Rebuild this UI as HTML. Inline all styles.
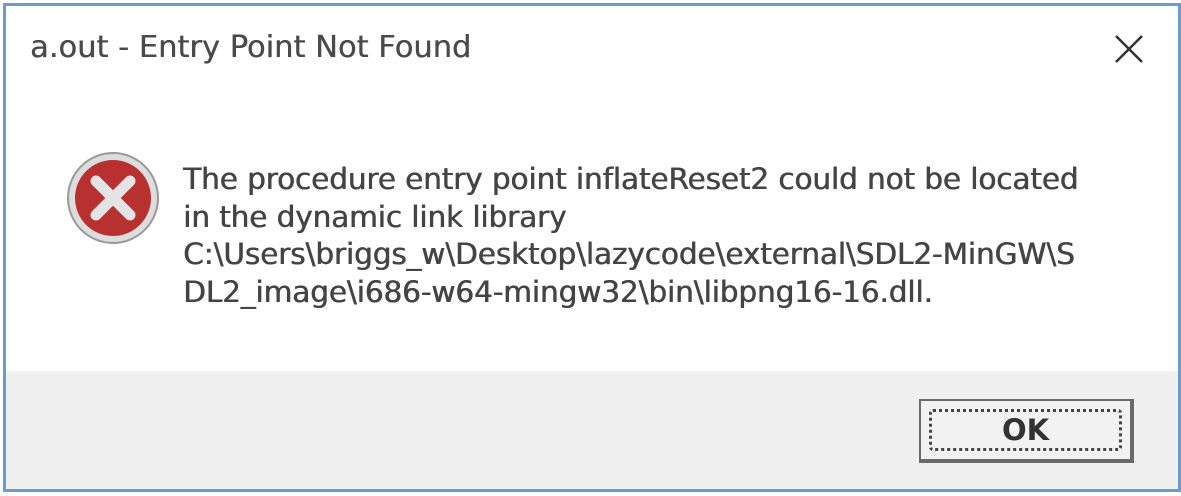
<!DOCTYPE html>
<html><head><style>
body{margin:0;width:1181px;height:496px;background:#fff;overflow:hidden;font-family:"DejaVu Sans","Liberation Sans",sans-serif;color:#3c3c3c}
.win{position:absolute;left:3px;top:3px;width:1172px;height:483px;border:3px solid #6d9ccc;background:#fff}
.title{position:absolute;left:24px;top:24px;font-size:30.5px;color:#4a4a4a;text-shadow:0.4px 0 0 #4a4a4a}
.x{position:absolute;left:1108px;top:28px}
.msg{position:absolute;left:177px;top:155px;font-size:29.5px;line-height:37.5px;color:#444;white-space:pre;letter-spacing:-0.1px;text-shadow:0.6px 0 0 #444}
.foot{position:absolute;left:0;top:365px;width:1172px;height:118px;background:#f0f0f0}
.btn{position:absolute;left:913px;top:28px;width:209px;height:58px;border:2px solid #6a6a6a;border-right-width:4px;border-bottom-width:4px;background:#f2f2f2}
.focus{position:absolute;left:8px;top:8px;right:8px;bottom:8px;border:3px dotted #444;border-radius:4px;text-align:center;font-size:29px;line-height:36px;color:#333;font-weight:bold}
</style></head><body>
<div class="win">
<div class="title">a.out - Entry Point Not Found</div>
<svg class="x" width="30" height="30"><path d="M2 2L28 28M28 2L2 28" stroke="#333" stroke-width="2.5"/></svg>
<svg style="position:absolute;left:60px;top:145px" width="94" height="94"><circle cx="47" cy="47" r="45" fill="#ddd" stroke="#999" stroke-width="2"/><circle cx="47" cy="47" r="38" fill="#b8302f"/><path d="M30 30L64 64M64 30L30 64" stroke="#e4e4e4" stroke-width="11" stroke-linecap="round"/></svg>
<div class="msg">The procedure entry point inflateReset2 could not be located
in the dynamic link library
C:\Users\briggs_w\Desktop\lazycode\external\SDL2-MinGW\S
DL2_image\i686-w64-mingw32\bin\libpng16-16.dll.</div>
<div class="foot"><div class="btn"><div class="focus">OK</div></div></div>
</div>
</body></html>
